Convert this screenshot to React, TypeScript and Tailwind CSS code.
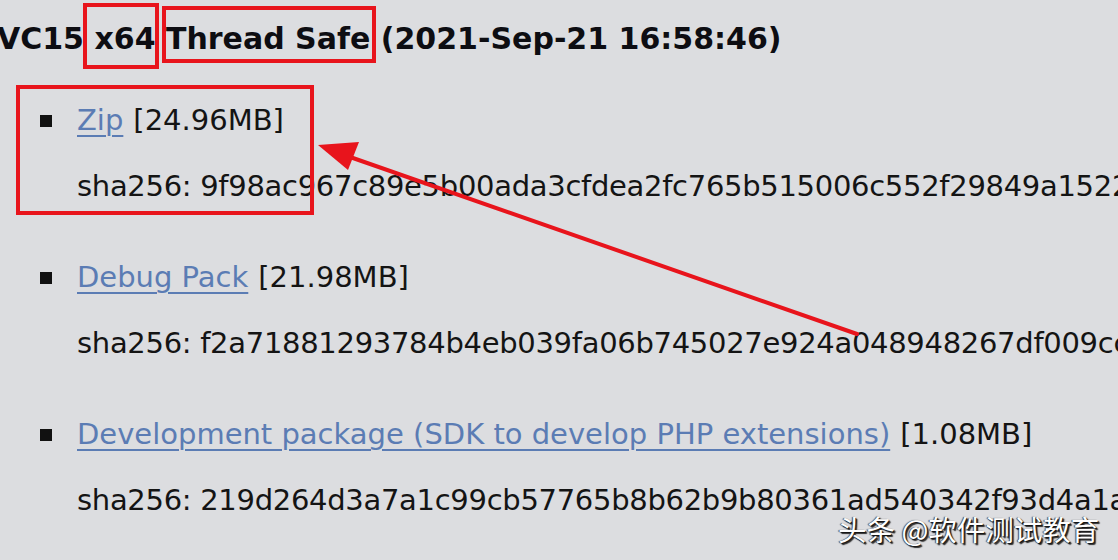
import React from "react";

const font = { fontFamily: '"DejaVu Sans", Verdana, sans-serif' };

function Item({ link, size, hash }: { link: string; size: string; hash: string }) {
  return (
    <li className="flex flex-col">
      <div className="flex items-center h-[40px] whitespace-nowrap">
        <span className="w-[12px] h-[12px] bg-[#111111] ml-[40px] mr-[25px] shrink-0" />
        <a className="text-[#5b7cb4] underline underline-offset-[5px] decoration-[2px]" href="#">
          {link}
        </a>
        <span className="ml-[10px] text-[#141414]">{size}</span>
      </div>
      <div className="h-[40px] leading-[40px] mt-[25px] pl-[77px] whitespace-nowrap text-[#141414] tracking-[-0.3px]">
        sha256: {hash}
      </div>
    </li>
  );
}

export default function App() {
  return (
    <div
      className="relative w-[1118px] h-[560px] overflow-hidden bg-[#dcdde0] text-[29px]"
      style={font}
    >
      <div className="h-[76px] flex items-center ml-[-3px] whitespace-nowrap font-bold text-[30px] text-[#0d0d12]">
        VC15 x64 Thread Safe (2021-Sep-21 16:58:46)
      </div>
      <ul className="mt-[25px] flex flex-col gap-[52px]">
        <Item link="Zip" size="[24.96MB]" hash="9f98ac967c89e5b00ada3cfdea2fc765b515006c552f29849a1522ab" />
        <Item
          link="Debug Pack"
          size="[21.98MB]"
          hash="f2a71881293784b4eb039fa06b745027e924a048948267df009cc1ab"
        />
        <Item
          link="Development package (SDK to develop PHP extensions)"
          size="[1.08MB]"
          hash="219d264d3a7a1c99cb57765b8b62b9b80361ad540342f93d4a1a2bc"
        />
      </ul>

      {/* annotation boxes */}
      <div className="absolute left-[83px] top-[3px] w-[76px] h-[66px] border-[4px] border-[#e8141c]" />
      <div className="absolute left-[162px] top-[6px] w-[214px] h-[57px] border-[4px] border-[#e8141c]" />
      <div className="absolute left-[16px] top-[85px] w-[298px] h-[130px] border-[4px] border-[#e8141c]" />

      {/* arrow */}
      <svg className="absolute left-0 top-0" width="1118" height="560" viewBox="0 0 1118 560">
        <line x1="857" y1="334" x2="350" y2="157" stroke="#e8141c" strokeWidth="4" strokeLinecap="round" />
        <polygon points="318,145 359,142 348,170" fill="#e8141c" />
      </svg>

      {/* watermark */}
      <div
        className="absolute left-[838px] top-[508px] text-[28.5px] text-white whitespace-nowrap"
        style={{
          fontFamily: '"Noto Sans CJK SC", "DejaVu Sans", sans-serif',
          textShadow: "1px 1px 1px #111, 2px 2px 1px #333, -1px 0 1px #444",
        }}
      >
        头条 @软件测试教育
      </div>
    </div>
  );
}
